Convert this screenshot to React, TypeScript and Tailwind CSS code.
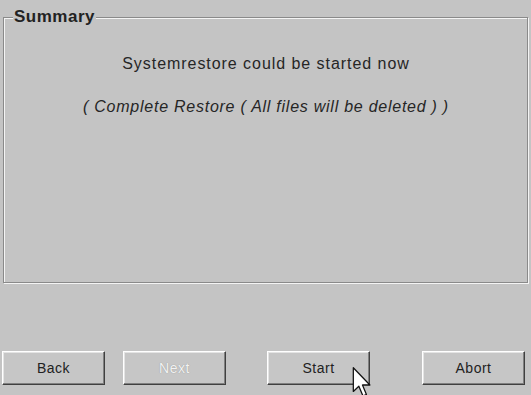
import React from 'react';

const Button = ({ label, disabled, className }: { label: string; disabled?: boolean; className?: string }) => (
    <button
        type="button"
        disabled={disabled}
        className={`w-[103px] h-[34px] bg-[#c6c6c6] border border-t-white border-l-white border-r-[#404040] border-b-[#404040] shadow-[inset_-1px_-1px_0_#808080,inset_1px_1px_0_#e4e4e4] text-[14px] leading-none tracking-[0.5px] ${className ?? ''}`}
    >
        <span className={disabled ? 'text-[#f2f2f2] [text-shadow:0_0_1px_#8a8a8a]' : 'text-[#222]'}>{label}</span>
    </button>
);

const Cursor = () => (
    <svg className="absolute left-[352px] top-[367px]" width="20" height="30" viewBox="0 0 12 19">
        <path
            d="M0.5 0.5 L0.5 15.5 L4 12.2 L6.6 18.3 L8.8 17.4 L6.3 11.4 L11 11.4 Z"
            fill="#fff"
            stroke="#111"
            strokeWidth="0.8"
            strokeLinejoin="round"
        />
    </svg>
);

export default function App() {
    return (
        <div className="relative w-[531px] h-[395px] overflow-hidden bg-[#c4c4c4] font-['Liberation_Sans',Arial,sans-serif] text-[#262626]">
            <div className="px-[3px] pt-[7px]">
                {/* Summary group box */}
                <fieldset className="h-[276px] border border-[#8a8a8a] shadow-[inset_1px_1px_0_#f4f4f4,1px_1px_0_#f4f4f4] pl-[9px]">
                    <legend className="px-[1px] text-[17px] font-bold tracking-[0.5px] text-[#222] bg-[#c4c4c4] leading-[20px]">Summary</legend>
                    <div className="flex flex-col items-center pt-[25px] pr-[8px]">
                        <p className="text-[16px] tracking-[0.95px]">Systemrestore could be started now</p>
                        <p className="mt-[19px] text-[16px] italic tracking-[0.75px]">( Complete Restore ( All files will be deleted ) )</p>
                    </div>
                </fieldset>
            </div>

            {/* Buttons */}
            <div className="flex pl-[2px] pt-[68px]">
                <Button label="Back" />
                <Button label="Next" disabled className="ml-[18px]" />
                <Button label="Start" className="ml-[41px]" />
                <Button label="Abort" className="ml-[52px]" />
            </div>

            <Cursor />
        </div>
    );
}
